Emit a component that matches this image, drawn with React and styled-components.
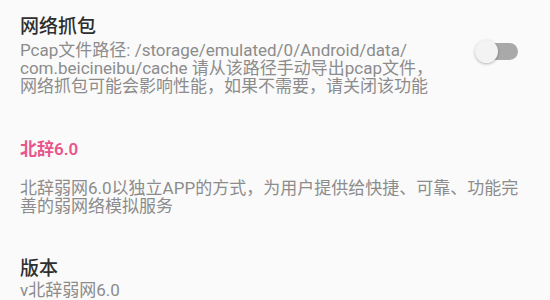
import React from "react";
import styled, { createGlobalStyle } from "styled-components";

const Global = createGlobalStyle`
  html, body { margin: 0; padding: 0; background: #fafafa; }
  body { font-family: Roboto, "Noto Sans CJK SC", "Noto Sans", sans-serif; }
`;

const Page = styled.div`
  width: 550px;
  height: 300px;
  overflow: hidden;
  background: #fafafa;
  padding: 16px 32px 0 20px;
  box-sizing: border-box;
  display: flex;
  flex-direction: column;
`;

const Row = styled.div`
  display: flex;
  align-items: center;
  justify-content: space-between;
`;

const TextBlock = styled.div`
  display: flex;
  flex-direction: column;
  margin-top: ${(p) => p.$top || 0}px;
`;

const Title = styled.div`
  font-size: 19px;
  line-height: 22px;
  font-weight: 500;
  color: #2e2e2e;
  margin-bottom: ${(p) => p.$gap || 0}px;
`;

const Category = styled.div`
  font-size: 17px;
  line-height: 22px;
  font-weight: 600;
  color: #e8558c;
  margin-top: 43px;
`;

const Desc = styled.div`
  font-size: 17px;
  line-height: 18px;
  color: #8c8c8c;
  margin-top: ${(p) => p.$top || 0}px;
`;

const Line = styled.div`
  white-space: nowrap;
`;

const SwitchWrap = styled.div`
  position: relative;
  width: 43px;
  height: 23px;
  margin-top: -8px;
  flex-shrink: 0;
`;

const Track = styled.div`
  position: absolute;
  left: 5px;
  top: 3px;
  width: 38px;
  height: 17px;
  border-radius: 9px;
  background: #a9a9a9;
`;

const Thumb = styled.div`
  position: absolute;
  left: 0;
  top: 0;
  width: 23px;
  height: 23px;
  border-radius: 50%;
  background: #f3f3f3;
  box-shadow: 0 1px 3px rgba(0, 0, 0, 0.28);
`;

function Switch() {
  return (
    <SwitchWrap>
      <Track />
      <Thumb />
    </SwitchWrap>
  );
}

export default function App() {
  return (
    <>
      <Global />
      <Page>
        <Row>
          <TextBlock>
            <Title $gap={3}>网络抓包</Title>
            <Desc>
              <Line>Pcap文件路径: /storage/emulated/0/Android/data/</Line>
              <Line>com.beicineibu/cache 请从该路径手动导出pcap文件，</Line>
              <Line>网络抓包可能会影响性能，如果不需要，请关闭该功能</Line>
            </Desc>
          </TextBlock>
          <Switch />
        </Row>
        <Category>北辞6.0</Category>
        <Desc $top={19}>
          <Line>北辞弱网6.0以独立APP的方式，为用户提供给快捷、可靠、功能完</Line>
          <Line>善的弱网络模拟服务</Line>
        </Desc>
        <TextBlock $top={43}>
          <Title $gap={1}>版本</Title>
          <Desc>v北辞弱网6.0</Desc>
        </TextBlock>
      </Page>
    </>
  );
}
